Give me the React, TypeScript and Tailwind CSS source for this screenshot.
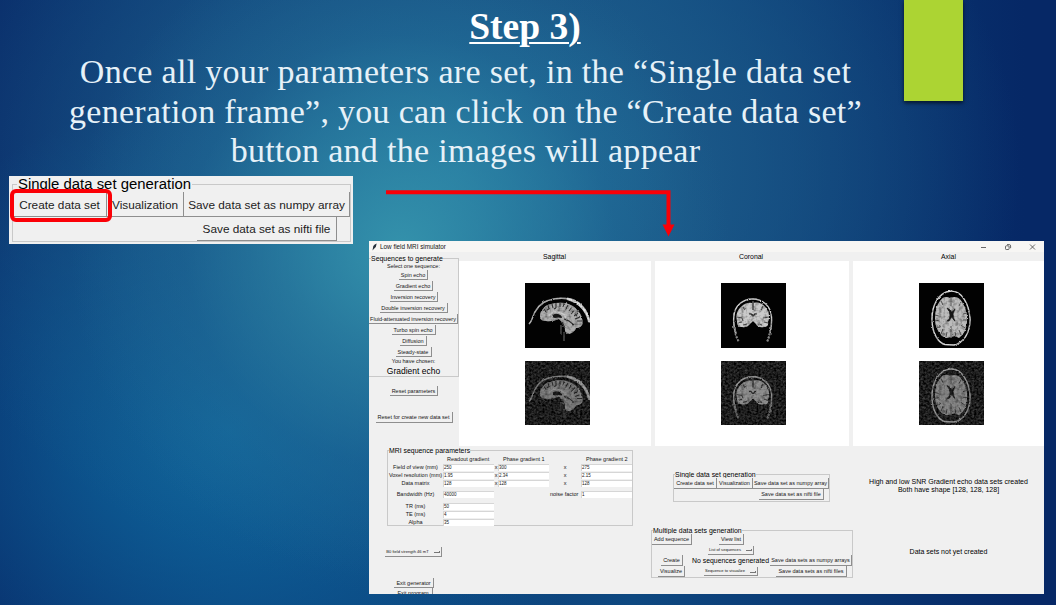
import type { ReactNode } from "react";
import clsx from "clsx";

type BtnProps = { children: ReactNode; className?: string };

function TkButton({ children, className }: BtnProps) {
  return (
    <div
      className={clsx(
        "flex shrink-0 items-center justify-center whitespace-nowrap border-r border-b border-[#8e8e8e] bg-[#f0f0f0] leading-none",
        className,
      )}
    >
      {children}
    </div>
  );
}

function SmallButton({ children, className }: BtnProps) {
  return <TkButton className={clsx("pt-[2px]", className)}>{children}</TkButton>;
}

function OptionMenu({ children, className }: BtnProps) {
  return (
    <TkButton className={clsx("gap-[5px] pt-px text-[4.1px]", className)}>
      <span>{children}</span>
      <span className="h-[2px] w-[6px] border-r border-b border-[#777]" />
    </TkButton>
  );
}

function Frame({ title, className, legendClass, children }: { title: string; className?: string; legendClass: string; children: ReactNode }) {
  return (
    <fieldset className={clsx("min-w-0 border border-[#c9c9c9]", className)}>
      <legend className={clsx("whitespace-nowrap text-black", legendClass)}>{title}</legend>
      {children}
    </fieldset>
  );
}

function Entry({ value, className }: { value: string; className?: string }) {
  return (
    <div className={clsx("flex h-[7px] w-[51px] items-center border-t border-l border-[#d6d6d6] bg-white pt-px text-[4.5px] leading-none", className)}>
      {value}
    </div>
  );
}

function Sagittal() {
  return (
    <g>
      <path d="M4 41 Q6 39 7 36 C10 27 14 20 23 17.500 Q34 14 44 16" fill="none" stroke="#b5b5b5" strokeWidth="1.3" />
      <path d="M42 15 C53 16 63 25 65 39 L63.500 39 C61 28 54 20 42 16.500 Z" fill="#e4e4e4" stroke="#dcdcdc" strokeWidth="0.8" />
      <path d="M15 34 Q15 28 18 26 Q20 22 26 21 Q33 19 40 20 Q49 22 53 28 Q58 33 57.500 41 Q56 45 51 45 Q50 49 44 51 Q39 50 40 45 Q38 42 39 40 Q36 39 34 36 Q27 39 21 38 Q15 38 15 34Z" fill="#adadad" />
      <path d="M27 34 Q28 30 33 31 Q37 32 37 35 Q33 34 30 35Z" fill="#181818" />
      <path d="M39 36 L44 38 L49 42 M40 45 L37 39" stroke="#303030" strokeWidth="1.1" fill="none" />
      <path d="M19 26 l2 3 M23 22 l1 4 l-2 1 M27 21 l1 4 M31 20 l0 5 l-2 1 M35 20 l0 4 M39 20 l-1 5 M43 22 l-2 4 M47 24 l-3 4 M50 27 l-4 4 M53 30 l-4 3 M55 34 l-5 2 M57 38 l-5 0" stroke="#303030" strokeWidth="1.05" fill="none" />
      <path d="M24 33 Q26 28 33 29 Q39 30 41 35" stroke="#c9c9c9" strokeWidth="1.3" fill="none" />
      <path d="M36 42 v9 M39 49 v9" stroke="#141414" strokeWidth="1.5" />
    </g>
  );
}

function Coronal() {
  return (
    <g>
      <path d="M15 50 Q12 43 12.800 34 C14 10 49 10 50.500 34 Q51 43 49 50" fill="none" stroke="#d2d2d2" strokeWidth="1.4" />
      <path d="M13.500 44 Q14 52 18 59 M49.500 44 Q49 52 46 59" fill="none" stroke="#8a8a8a" strokeWidth="1.9" strokeDasharray="2 1.200" />
      <path d="M16 38 Q14 29 20 24 Q25 19 31 20 Q40 18 45 25 Q50 31 47 39 Q48 44 43 44 Q37 45 35 41 L32 38 L28 42 Q26 45 20 44 Q16 44 16 38Z" fill="#cacaca" />
      <path d="M32 18 v9 M28 31 q3 -1 3.500 2.500 M36 31 q-3 -1 -3.500 2.500" stroke="#2c2c2c" strokeWidth="1.3" fill="none" />
      <path d="M16 34 l5 1 l1 3 M48 34 l-6 1 M22 24 l2 3 M42 23 l-2 4 M17 40 l4 -1 M47 40 l-4 -1 M26 41 l-4 1 M37 41 l4 1" stroke="#4c4c4c" strokeWidth="1.1" fill="none" />
    </g>
  );
}

function Axial() {
  return (
    <g>
      <path d="M31 8.200 C43 7 50 21 51.200 36 C51 51 44 60 35 62 L26 61.500 C19 60 13 50 13 36 C13 22 20 9 31 8.200Z" fill="none" stroke="#dadada" strokeWidth="1.4" />
      <path d="M31 15 Q39 12 43 19 Q49 28 48 39 Q47 50 40 55 L36 53 L32 54 L27 55 L23 53 Q16 46 16 36 Q16 24 21 18 Q25 12 31 15Z" fill="#bcbcbc" />
      <path d="M28 25 Q31 29 31 32 Q31 36 28 38 L30 38 Q32 34 33 34 Q35 38 36 38 Q34 35 34 31 L36 26 L34 27 Q33 31 31.500 27Z" fill="#171717" stroke="#171717" strokeWidth="0.7" />
      <path d="M32 14 v9 M32 44 v11 M16 32 l4 1 M16 38 l5 -1 M18 45 l4 -2 M22 51 l2 -5 M27 54 l1 -5 M37 54 l-1 -5 M42 52 l-2 -5 M46 45 l-4 -3 M48 37 l-4 0 M48 30 l-4 1 M22 18 l2 4 M42 19 l-2 4" stroke="#505050" strokeWidth="1" />
      <path d="M21 25 q-2 9 0 17 M42 25 q3 9 0 17 M25 29 v8 M39 29 v8" stroke="#a4a4a4" strokeWidth="1" fill="none" />
    </g>
  );
}

function Scan({ id, noisy, children }: { id: string; noisy?: boolean; children: ReactNode }) {
  return (
    <svg viewBox="0 0 65 65" className={clsx("w-[65px] bg-black", noisy ? "h-[64px]" : "h-[65px]")} preserveAspectRatio="none">
      <defs>
        <filter id={`${id}-rough`} x="0" y="0" width="65" height="65" filterUnits="userSpaceOnUse" colorInterpolationFilters="sRGB">
          <feTurbulence type="fractalNoise" baseFrequency="0.3" numOctaves="2" seed="7" result="n" />
          <feDisplacementMap in="SourceGraphic" in2="n" scale="2.2" xChannelSelector="R" yChannelSelector="G" result="d" />
          <feColorMatrix in="n" type="matrix" values="0 0.9 0 0 0.5 0 0.9 0 0 0.5 0 0.9 0 0 0.5 0 0 0 0 1" result="g" />
          <feBlend in="d" in2="g" mode="multiply" result="m" />
          <feComposite in="m" in2="d" operator="in" />
          <feGaussianBlur stdDeviation="0.35" />
        </filter>
        <filter id={`${id}-noise`} x="0" y="0" width="65" height="65" filterUnits="userSpaceOnUse" colorInterpolationFilters="sRGB">
          <feTurbulence type="fractalNoise" baseFrequency="0.45" numOctaves="2" seed="11" />
          <feColorMatrix type="matrix" values="0.42 0 0 0 -0.1 0.42 0 0 0 -0.1 0.42 0 0 0 -0.1 0 0 0 0 1" />
        </filter>
      </defs>
      <rect width="65" height="65" fill="#020202" />
      {noisy && <rect width="65" height="65" filter={`url(#${id}-noise)`} />}
      <g filter={`url(#${id}-rough)`} opacity={noisy ? 0.76 : 1}>
        {children}
      </g>
      {noisy && <rect width="65" height="65" filter={`url(#${id}-noise)`} opacity="0.15" />}
    </svg>
  );
}

function View({ title, id, className, padding, titleClass, children }: { title: string; id: string; className: string; padding: string; titleClass: string; children: ReactNode }) {
  return (
    <div className={clsx("flex shrink-0 flex-col", className)}>
      <div className={clsx("flex h-[9px] items-center pt-[2px] text-[6.9px] leading-none text-black", titleClass)}>{title}</div>
      <div className={clsx("flex h-[185px] flex-col items-start gap-[13px] bg-white pt-[22px]", padding)}>
        <Scan id={`${id}-high`}>{children}</Scan>
        <Scan id={`${id}-low`} noisy>{children}</Scan>
      </div>
    </div>
  );
}

const sequences = [
  { name: "Spin echo", w: "w-[29px]" },
  { name: "Gradient echo", w: "w-[39px]" },
  { name: "Inversion recovery", w: "w-[48px]" },
  { name: "Double inversion recovery", w: "w-[68px]" },
  { name: "Fluid-attenuated inversion recovery", w: "w-[89px]" },
  { name: "Turbo spin echo", w: "w-[44px]" },
  { name: "Diffusion", w: "w-[27px]" },
  { name: "Steady-state", w: "w-[36px]" },
];

function Sidebar() {
  return (
    <div className="flex w-[90px] shrink-0 flex-col items-center pt-[2px]">
      <Frame title="Sequences to generate" className="h-[123px] w-[90px] border-l-0" legendClass="ml-[2px] pt-px text-[6.95px] leading-[7px]">
        <div className="flex flex-col items-center leading-none">
          <div className="flex h-[8px] items-center pt-px">Select one sequence:</div>
          {sequences.map((s) => (
            <div key={s.name} className="flex h-[10.95px] items-center">
              <SmallButton className={clsx("h-[10px]", s.w)}>{s.name}</SmallButton>
            </div>
          ))}
          <div className="flex h-[8px] items-center pt-px">You have chosen:</div>
          <div className="flex h-[10px] items-center pt-px text-[8.5px] text-black">Gradient echo</div>
        </div>
      </Frame>
      <SmallButton className="mt-[9px] h-[10px] w-[48px]">Reset parameters</SmallButton>
      <SmallButton className="mt-[16px] h-[11px] w-[77px]">Reset for create new data set</SmallButton>
    </div>
  );
}

const dimensions = [
  { label: "Field of view (mm)", values: ["250", "300", "275"] },
  { label: "Voxel resolution (mm)", values: ["1.95", "2.34", "2.15"] },
  { label: "Data matrix", values: ["128", "128", "128"] },
];

const timings = [
  { label: "TR (ms)", value: "50" },
  { label: "TE (ms)", value: "4" },
  { label: "Alpha", value: "35" },
];

function Parameters() {
  return (
    <div className="flex w-[282px] shrink-0 flex-col items-start">
      <Frame title="MRI sequence parameters" className="ml-[18px] mt-[1px] h-[79px] w-[246px]" legendClass="ml-[1px] text-[6.9px] leading-[7px]">
        <div className="flex h-[9px] items-center pt-[3px] leading-none">
          <span className="ml-[59px] w-[51px]">Readout gradient</span>
          <span className="ml-[5px] w-[51px]">Phase gradient 1</span>
          <span className="ml-[32px]">Phase gradient 2</span>
        </div>
        {dimensions.map((d) => (
          <div key={d.label} className="flex h-[8px] items-center whitespace-nowrap leading-none">
            <span className="w-[55px] pt-px text-center">{d.label}</span>
            <Entry value={d.values[0]} />
            <span className="w-[4px] pt-px text-center">x</span>
            <Entry value={d.values[1]} />
            <span className="w-[32px] pt-px text-center">x</span>
            <Entry value={d.values[2]} />
          </div>
        ))}
        <div className="mt-[3px] flex h-[8px] items-center whitespace-nowrap leading-none">
          <span className="w-[55px] pt-px text-center">Bandwidth (Hz)</span>
          <Entry value="40000" />
          <span className="ml-[56px] w-[31px] pt-px">noise factor</span>
          <Entry value="1" />
        </div>
        <div className="mt-[4px]">
          {timings.map((t) => (
            <div key={t.label} className="flex h-[8px] items-center leading-none">
              <span className="w-[55px] pt-px text-center">{t.label}</span>
              <Entry value={t.value} />
            </div>
          ))}
        </div>
      </Frame>
      <OptionMenu className="ml-[16px] mt-[21px] h-[10px] w-[57px]">B0 field strength 46 mT</OptionMenu>
      <SmallButton className="ml-[25px] mt-[21px] h-[10px] w-[40px]">Exit generator</SmallButton>
      <SmallButton className="ml-[25px] h-[10px] w-[39px]">Exit program</SmallButton>
    </div>
  );
}

function Generation() {
  return (
    <div className="flex w-[202px] shrink-0 flex-col">
      <Frame title="Single data set generation" className="ml-[22px] mt-[25px] h-[31px] w-[157px]" legendClass="ml-[1px] text-[6.95px] leading-[7px]">
        <div className="flex">
          <SmallButton className="h-[11px] w-[43px]">Create data set</SmallButton>
          <SmallButton className="h-[11px] w-[36px]">Visualization</SmallButton>
          <SmallButton className="h-[11px] w-[76px]">Save data set as numpy array</SmallButton>
        </div>
        <SmallButton className="ml-[85px] h-[11px] w-[65px]">Save data set as nifti file</SmallButton>
      </Frame>
      <Frame title="Multiple data sets generation" className="mt-[25px] h-[51px] w-[202px]" legendClass="ml-[1px] text-[6.95px] leading-[7px]">
        <div className="flex h-[11px]">
          <SmallButton className="h-[11px] w-[40px]">Add sequence</SmallButton>
          <SmallButton className="ml-[27px] h-[11px] w-[25px]">View list</SmallButton>
        </div>
        <div className="flex h-[10px] items-center pl-[56px]">
          <OptionMenu className="h-[9px] w-[46px]">List of sequences</OptionMenu>
        </div>
        <div className="flex h-[11px] items-center whitespace-nowrap leading-none">
          <SmallButton className="ml-[9px] h-[11px] w-[22px]">Create</SmallButton>
          <span className="ml-[9px] w-[78px] pt-[2px] text-[6.9px] text-black">No sequences generated</span>
          <SmallButton className="h-[11px] w-[82px]">Save data sets as numpy arrays</SmallButton>
        </div>
        <div className="flex h-[11px] items-center">
          <SmallButton className="ml-[6px] h-[11px] w-[27px]">Visualize</SmallButton>
          <OptionMenu className="ml-[19px] h-[9px] w-[54px]">Sequence to visualize</OptionMenu>
          <SmallButton className="ml-[18px] h-[11px] w-[71px]">Save data sets as nifti files</SmallButton>
        </div>
      </Frame>
    </div>
  );
}

function SimulatorWindow() {
  return (
    <div className="ml-[16px] mt-[65px] flex h-[353px] w-[675px] shrink-0 flex-col overflow-hidden bg-[#f0f0f0] text-[5.5px] text-[#161616]">
      <div className="flex h-[11px] shrink-0 items-center bg-[#f7f6f4] pl-[3px]">
        <svg viewBox="0 0 5 8" className="h-[8px] w-[5px]">
          <path d="M0.500 7.500 L1.300 3 Q2.500 1 4.700 0.400 Q4.500 4 1.800 6Z" fill="#27313c" />
        </svg>
        <span className="ml-[3px] pt-[2px] text-[6.35px] leading-none">Low field MRI simulator</span>
        <svg viewBox="0 0 56 8" className="ml-auto mr-[8px] h-[8px] w-[56px]" fill="none" stroke="#444" strokeWidth="0.8">
          <path d="M1 4.500h5M50 1.500l5 5M55 1.500l-5 5" />
          <rect x="25.500" y="2.800" width="3.600" height="3.700" rx="0.800" />
          <path d="M27 1.600h2.300q1.300 0 1.300 1.300v2.300" />
        </svg>
      </div>
      <div className="flex h-[194px] shrink-0">
        <Sidebar />
        <View title="Sagittal" id="sagittal" className="w-[192px]" padding="pl-[65.500px]" titleClass="pl-[84px]">
          <Sagittal />
        </View>
        <View title="Coronal" id="coronal" className="ml-[4px] w-[194px]" padding="pl-[66px]" titleClass="pl-[84px]">
          <Coronal />
        </View>
        <View title="Axial" id="axial" className="ml-[4px] w-[191px]" padding="pl-[66px]" titleClass="pl-[88px]">
          <Axial />
        </View>
      </div>
      <div className="flex h-[148px] shrink-0">
        <Parameters />
        <Generation />
        <div className="flex flex-1 flex-col items-center text-center text-[7px] leading-[8px] text-black">
          <div className="mt-[32px] whitespace-nowrap">
            High and low SNR Gradient echo data sets created
            <br />
            Both have shape [128, 128, 128]
          </div>
          <div className="mt-[54px]">Data sets not yet created</div>
        </div>
      </div>
    </div>
  );
}

function Snippet() {
  return (
    <div className="relative h-[68px] w-[344px] shrink-0 bg-[#f0f0f0] pt-[1px] pl-[3px] text-[11.8px] text-[#1c1c1c]">
      <Frame title="Single data set generation" className="h-[65px] w-[339px]" legendClass="ml-[4px] text-[14.9px] leading-[15px] px-px">
        <div className="flex">
          <TkButton className="h-[25px] w-[94px] pt-[4px]">Create data set</TkButton>
          <TkButton className="h-[25px] w-[77px] pt-[4px]">Visualization</TkButton>
          <TkButton className="h-[25px] w-[166px] pt-[4px]">Save data set as numpy array</TkButton>
        </div>
        <TkButton className="ml-[184px] h-[24px] w-[140px] pt-[2px]">Save data set as nifti file</TkButton>
      </Frame>
      <div className="absolute left-[1px] top-[13px] h-[33px] w-[102px] rounded-[6px] border-4 border-[#fb0007]" />
    </div>
  );
}

export default function App() {
  return (
    <div className="relative flex h-[605px] w-[1056px] flex-col overflow-hidden bg-[#0a3a76] bg-[radial-gradient(ellipse_330px_330px_at_400px_250px,#3798afe0_0%,#308caa90_35%,#2476a048_65%,#1b5b8a00_100%),radial-gradient(ellipse_560px_430px_at_460px_170px,#22709a_0%,#1d5c8ad0_42%,#0a3a7600_100%),radial-gradient(ellipse_380px_340px_at_230px_430px,#0e689f_0%,#0e689f00_100%),linear-gradient(90deg,#082b69_0%,#0a3a76_22%,#0e4880_60%,#062866_97%)] font-['Liberation_Sans',Arial,sans-serif]">
      <header className="flex h-[176px] shrink-0 flex-col pt-px font-['Liberation_Serif','Times_New_Roman',serif]">
        <h1 className="h-[51px] w-[1050px] text-center text-[37.5px] font-bold leading-[51px] text-white underline decoration-2 underline-offset-[3px]">Step 3)</h1>
        <div className="w-[931px] whitespace-nowrap text-center text-[34px] leading-[39.500px] tracking-[0.3px] text-[#e6f1f8]">
          <p>Once all your parameters are set, in the “Single data set</p>
          <p>generation frame”, you can click on the “Create data set”</p>
          <p>button and the images will appear</p>
        </div>
      </header>
      <main className="flex items-start pl-[9px]">
        <Snippet />
        <SimulatorWindow />
      </main>
      <div className="absolute left-[904px] top-0 h-[101px] w-[59px] bg-[#acd433] shadow-[0_2px_4px_rgba(0,0,0,0.65)]" />
      <svg className="absolute left-[386px] top-[186px] h-[52px] w-[292px]" viewBox="0 0 292 52">
        <path d="M0 6.300H282.500V40" fill="none" stroke="#f90007" strokeWidth="4" />
        <path d="M276.500 38.500H288.500L282.500 50.500Z" fill="#f90007" />
      </svg>
    </div>
  );
}
